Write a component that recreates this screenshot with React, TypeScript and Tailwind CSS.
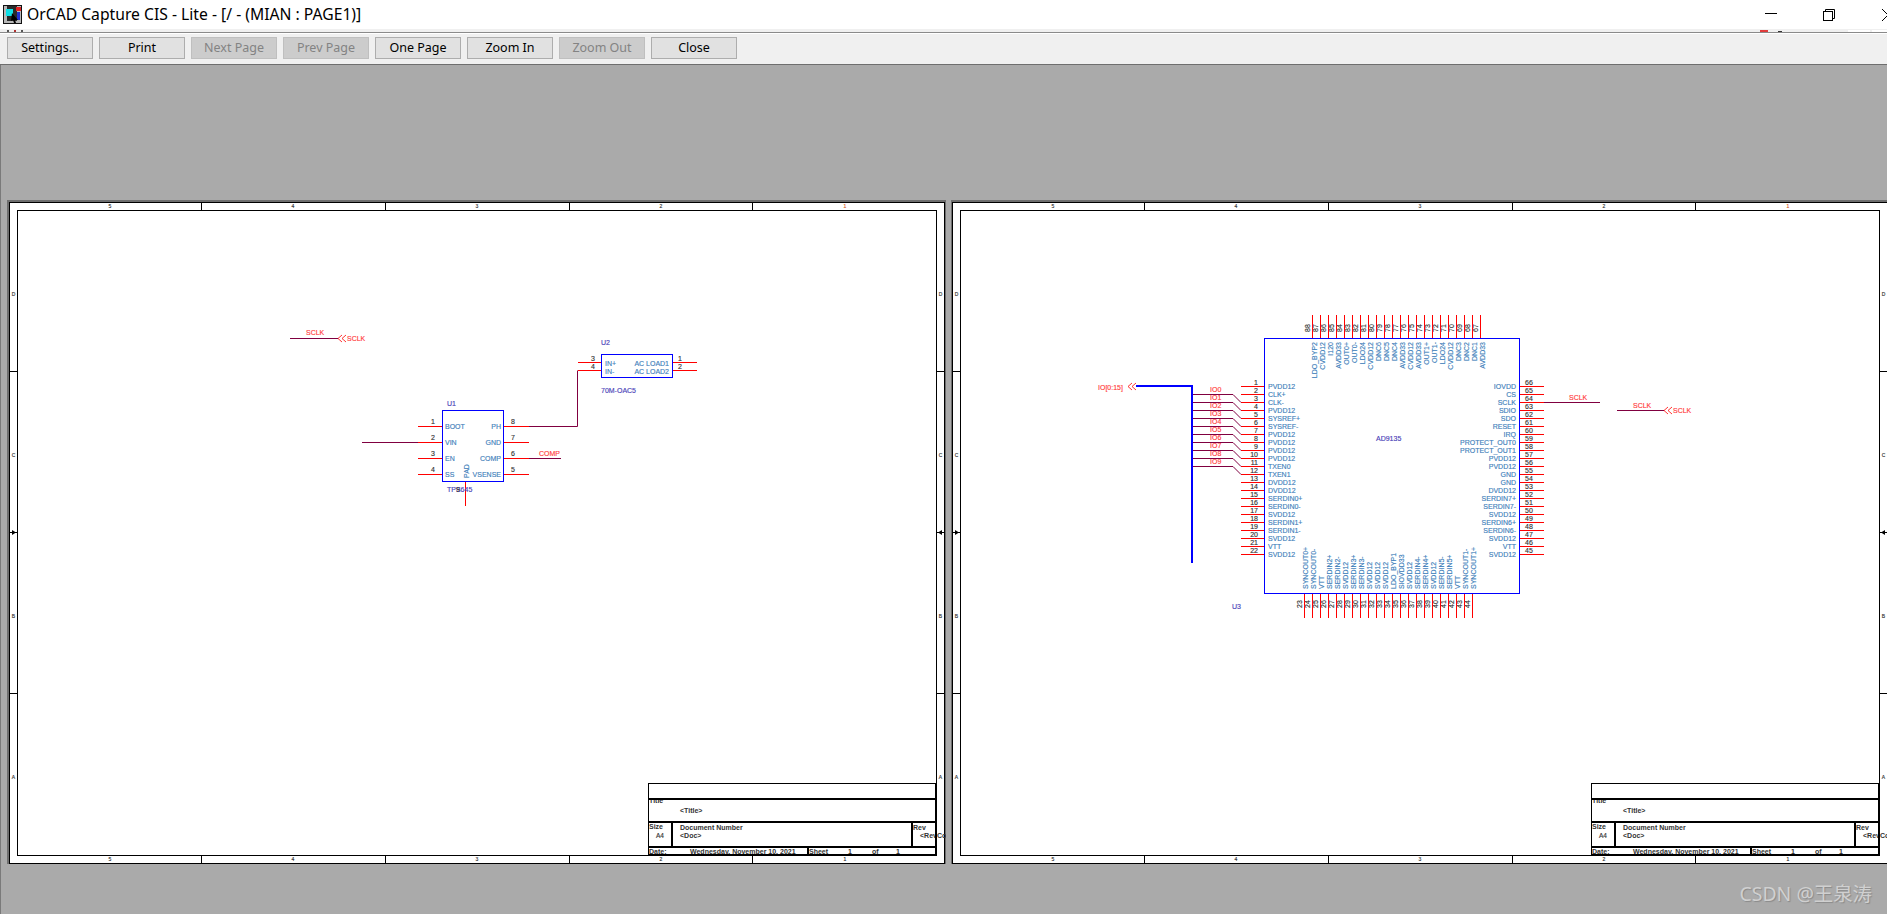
import type { ReactNode } from "react";

const RED = "#ff0000";
const WIRE = "#800040";
const BLUE = "#0000ff";
const NAME = "#3f7fbb";
const NUM = "#333333";
const NET = "#ff4040";
const REF = "#4a3fb8";

const buttons = [
  { label: "Settings...", off: false },
  { label: "Print", off: false },
  { label: "Next Page", off: true },
  { label: "Prev Page", off: true },
  { label: "One Page", off: false },
  { label: "Zoom In", off: false },
  { label: "Zoom Out", off: true },
  { label: "Close", off: false },
];

const u3Left = ["PVDD12", "CLK+", "CLK-", "PVDD12", "SYSREF+", "SYSREF-", "PVDD12", "PVDD12", "PVDD12", "PVDD12", "TXEN0", "TXEN1", "DVDD12", "DVDD12", "SERDIN0+", "SERDIN0-", "SVDD12", "SERDIN1+", "SERDIN1-", "SVDD12", "VTT", "SVDD12"];
const u3Right = ["IOVDD", "CS", "SCLK", "SDIO", "SDO", "RESET", "IRQ", "PROTECT_OUT0", "PROTECT_OUT1", "PVDD12", "PVDD12", "GND", "GND", "DVDD12", "SERDIN7+", "SERDIN7-", "SVDD12", "SERDIN6+", "SERDIN6-", "SVDD12", "VTT", "SVDD12"];
const u3Top = ["LDO_BYP2", "CVDD12", "I120", "AVDD33", "OUT0+", "OUT0-", "LDO24", "CVDD12", "DNC6", "DNC5", "DNC4", "AVDD33", "CVDD12", "AVDD33", "OUT1+", "OUT1-", "LDO24", "CVDD12", "DNC3", "DNC2", "DNC1", "AVDD33"];
const u3Bottom = ["SYNCOUT0+", "SYNCOUT0-", "VTT", "SERDIN2+", "SERDIN2-", "SVDD12", "SERDIN3+", "SERDIN3-", "SVDD12", "SVDD12", "SVDD12", "LDO_BYP1", "SIOVDD33", "SVDD12", "SERDIN4-", "SERDIN4+", "SVDD12", "SERDIN5-", "SERDIN5+", "VTT", "SYNCOUT1-", "SYNCOUT1+"];

type TProps = {
  x: number;
  y: number;
  c?: string;
  s?: number;
  a?: "start" | "middle" | "end";
  up?: boolean;
  b?: boolean;
  children: ReactNode;
};

function T({ x, y, c = NUM, s = 7, a = "start", up, b, children }: TProps) {
  return (
    <text
      x={x}
      y={y}
      fill={c}
      stroke={b ? "none" : c}
      strokeWidth={0.15}
      fontSize={s}
      textAnchor={a}
      fontWeight={b ? 700 : 400}
      transform={up ? `rotate(-90 ${x} ${y})` : undefined}
    >
      {children}
    </text>
  );
}

function L({ x1, y1, x2, y2, c = "#000", w = 1 }: { x1: number; y1: number; x2: number; y2: number; c?: string; w?: number }) {
  return <line x1={x1} y1={y1} x2={x2} y2={y2} stroke={c} strokeWidth={w} />;
}

// the << off-page connector, tip on the left
function OffPage({ x, y }: { x: number; y: number }) {
  return (
    <path
      d={`M${x + 4} ${y - 3.5}L${x} ${y}L${x + 4} ${y + 3.5}M${x + 8} ${y - 3.5}L${x + 4} ${y}L${x + 8} ${y + 3.5}`}
      fill="none"
      stroke={RED}
      strokeWidth={0.8}
    />
  );
}

function Frame({ dx }: { dx: number }) {
  const ticksX = [201, 385, 569, 752];
  const ticksY = [371, 532, 693];
  const cols = [
    { n: "5", x: 110 },
    { n: "4", x: 293 },
    { n: "3", x: 477 },
    { n: "2", x: 661 },
    { n: "1", x: 845 },
  ];
  const rows = [
    { n: "D", y: 296 },
    { n: "C", y: 457 },
    { n: "B", y: 618 },
    { n: "A", y: 779 },
  ];
  return (
    <g transform={`translate(${dx} 0)`}>
      <rect x={9.5} y={202.5} width={935} height={661} fill="#fff" stroke="#000" />
      <rect x={17.5} y={210.5} width={919} height={645} fill="#fff" stroke="#000" />
      {ticksX.map((x) => (
        <g key={x}>
          <L x1={x + 0.5} y1={202} x2={x + 0.5} y2={210} />
          <L x1={x + 0.5} y1={855} x2={x + 0.5} y2={863} />
        </g>
      ))}
      {ticksY.map((y, i) =>
        i === 1 ? (
          <g key={y}>
            <L x1={10} y1={y + 0.5} x2={17} y2={y + 0.5} />
            <path d={`M12 ${y - 2}L16 ${y + 0.5}L12 ${y + 3}Z`} fill="#000" />
            <L x1={937} y1={y + 0.5} x2={944} y2={y + 0.5} />
            <path d={`M942 ${y - 2}L938 ${y + 0.5}L942 ${y + 3}Z`} fill="#000" />
          </g>
        ) : (
          <g key={y}>
            <L x1={10} y1={y + 0.5} x2={17} y2={y + 0.5} />
            <L x1={937} y1={y + 0.5} x2={944} y2={y + 0.5} />
          </g>
        ),
      )}
      {cols.map((k) => (
        <g key={k.n}>
          <T x={k.x} y={208} s={5} a="middle" c={k.n === "1" ? "#d8602a" : "#333"}>{k.n}</T>
          <T x={k.x} y={861} s={5} a="middle" c="#333">{k.n}</T>
        </g>
      ))}
      {rows.map((k) => (
        <g key={k.n}>
          <T x={13.5} y={k.y} s={5} a="middle" c="#333">{k.n}</T>
          <T x={940.5} y={k.y} s={5} a="middle" c="#333">{k.n}</T>
        </g>
      ))}

      {/* title block */}
      <T x={649} y={803} b>Title</T>
      <T x={680} y={813} b>{"<Title>"}</T>
      <T x={649} y={829} b>Size</T>
      <T x={656} y={838} s={6.5}>A4</T>
      <T x={680} y={830} b>Document Number</T>
      <T x={680} y={838} b>{"<Doc>"}</T>
      <T x={913} y={830} b>Rev</T>
      <T x={920} y={838} b>{"<RevCo"}</T>
      <T x={649} y={854} b>Date:</T>
      <T x={690} y={854} b>Wednesday, November 10, 2021</T>
      <T x={809} y={854} b>Sheet</T>
      <T x={848} y={854} b>1</T>
      <T x={872} y={854} b>of</T>
      <T x={896} y={854} b>1</T>
      <L x1={648} y1={783.5} x2={936} y2={783.5} />
      <L x1={648} y1={799} x2={936} y2={799} w={2} />
      <L x1={648} y1={822} x2={936} y2={822} w={2} />
      <L x1={648} y1={847} x2={936} y2={847} w={2} />
      <L x1={648} y1={855} x2={936} y2={855} w={2} />
      <L x1={648.5} y1={783} x2={648.5} y2={855} />
      <L x1={672} y1={822} x2={672} y2={847} w={2} />
      <L x1={912} y1={822} x2={912} y2={847} w={2} />
      <L x1={808} y1={847} x2={808} y2={855} w={2} />
      <L x1={936} y1={783} x2={936} y2={855} w={2} />
    </g>
  );
}

function PageOne() {
  const leftPins = [
    { n: "1", t: "BOOT", y: 426 },
    { n: "2", t: "VIN", y: 442 },
    { n: "3", t: "EN", y: 458 },
    { n: "4", t: "SS", y: 474 },
  ];
  const rightPins = [
    { n: "8", t: "PH", y: 426 },
    { n: "7", t: "GND", y: 442 },
    { n: "6", t: "COMP", y: 458 },
    { n: "5", t: "VSENSE", y: 474 },
  ];
  return (
    <g>
      <L x1={290} y1={338.5} x2={338} y2={338.5} c={WIRE} />
      <OffPage x={338} y={338.5} />
      <T x={306} y={335} c={NET}>SCLK</T>
      <T x={347} y={341} c={NET}>SCLK</T>

      {/* U2 */}
      <T x={601} y={345} c={REF}>U2</T>
      <rect x={601.5} y={354.5} width={71} height={23} fill="none" stroke={BLUE} />
      <L x1={578} y1={362.5} x2={601} y2={362.5} c={RED} />
      <L x1={578} y1={370.5} x2={601} y2={370.5} c={RED} />
      <L x1={673} y1={362.5} x2={697} y2={362.5} c={RED} />
      <L x1={673} y1={370.5} x2={697} y2={370.5} c={RED} />
      <T x={591} y={361}>3</T>
      <T x={591} y={369}>4</T>
      <T x={678} y={361}>1</T>
      <T x={678} y={369}>2</T>
      <T x={605} y={366} c={NAME}>IN+</T>
      <T x={605} y={374} c={NAME}>IN-</T>
      <T x={669} y={366} c={NAME} a="end">AC LOAD1</T>
      <T x={669} y={374} c={NAME} a="end">AC LOAD2</T>
      <T x={601} y={393} c={REF}>70M-OAC5</T>
      <path d="M529 426.5H577.5V370.5" fill="none" stroke={WIRE} />

      {/* U1 */}
      <T x={447} y={406} c={REF}>U1</T>
      <rect x={442.5} y={410.5} width={61} height={71} fill="none" stroke={BLUE} />
      {leftPins.map((p) => (
        <g key={p.n}>
          <L x1={418} y1={p.y + 0.5} x2={442} y2={p.y + 0.5} c={RED} />
          <T x={431} y={p.y - 2}>{p.n}</T>
          <T x={445} y={p.y + 3} c={NAME}>{p.t}</T>
        </g>
      ))}
      {rightPins.map((p) => (
        <g key={p.n}>
          <L x1={504} y1={p.y + 0.5} x2={529} y2={p.y + 0.5} c={RED} />
          <T x={511} y={p.y - 2}>{p.n}</T>
          <T x={501} y={p.y + 3} c={NAME} a="end">{p.t}</T>
        </g>
      ))}
      <L x1={362} y1={442.5} x2={418} y2={442.5} c={WIRE} />
      <L x1={529} y1={458.5} x2={561} y2={458.5} c={WIRE} />
      <T x={539} y={456} c={NET}>COMP</T>
      <L x1={465.5} y1={482} x2={465.5} y2={506} c={RED} />
      <T x={469} y={478} c={NAME} up>PAD</T>
      <T x={447} y={492} c={REF}>TPS645</T>
      <T x={456} y={492} c={NUM}>9</T>
    </g>
  );
}

function PageTwo() {
  return (
    <g>
      <rect x={1264.5} y={338.5} width={255} height={255} fill="none" stroke={BLUE} />
      <T x={1376} y={441} c={REF}>AD9135</T>
      <T x={1232} y={609} c={REF}>U3</T>

      {u3Left.map((t, i) => {
        const y = 386 + i * 8;
        return (
          <g key={i}>
            <L x1={1241} y1={y + 0.5} x2={1264} y2={y + 0.5} c={RED} />
            <T x={1258} y={y - 1} a="end">{i + 1}</T>
            <T x={1268} y={y + 3} c={NAME}>{t}</T>
          </g>
        );
      })}
      {u3Right.map((t, i) => {
        const y = 386 + i * 8;
        return (
          <g key={i}>
            <L x1={1520} y1={y + 0.5} x2={1544} y2={y + 0.5} c={RED} />
            <T x={1525} y={y - 1}>{66 - i}</T>
            <T x={1516} y={y + 3} c={NAME} a="end">{t}</T>
          </g>
        );
      })}
      {u3Top.map((t, i) => {
        const x = 1312 + i * 8;
        return (
          <g key={i}>
            <L x1={x + 0.5} y1={315} x2={x + 0.5} y2={338} c={RED} />
            <T x={x - 2} y={332} up>{88 - i}</T>
            <T x={x + 5} y={342} c={NAME} a="end" up>{t}</T>
          </g>
        );
      })}
      {u3Bottom.map((t, i) => {
        const x = 1304 + i * 8;
        return (
          <g key={i}>
            <L x1={x + 0.5} y1={594} x2={x + 0.5} y2={618} c={RED} />
            <T x={x - 2} y={608} up>{23 + i}</T>
            <T x={x + 4} y={589} c={NAME} up>{t}</T>
          </g>
        );
      })}

      {/* IO bus */}
      <T x={1098} y={390} c={NET}>IO[0:15]</T>
      <OffPage x={1128} y={386.5} />
      <path d="M1136 386H1192V563" fill="none" stroke={BLUE} strokeWidth={2} />
      {Array.from({ length: 10 }, (_, i) => {
        const y = 394 + i * 8;
        return (
          <g key={i}>
            <path d={`M1193 ${y + 0.5}H1233L1241 ${y + 8.5}`} fill="none" stroke={WIRE} />
            <T x={1210} y={y - 2} c={NET}>{`IO${i}`}</T>
          </g>
        );
      })}

      <L x1={1544} y1={402.5} x2={1600} y2={402.5} c={WIRE} />
      <T x={1569} y={400} c={NET}>SCLK</T>
      <L x1={1617} y1={410.5} x2={1664} y2={410.5} c={WIRE} />
      <T x={1633} y={408} c={NET}>SCLK</T>
      <OffPage x={1664} y={410.5} />
      <T x={1673} y={413} c={NET}>SCLK</T>
    </g>
  );
}

function AppIcon() {
  return (
    <svg width="19" height="19" viewBox="0 0 19 19" className="ml-[3px] shrink-0">
      <rect width="19" height="19" fill="#111" />
      <rect x="1" y="1" width="17" height="17" fill="#b8b8b8" />
      <rect x="4" y="1" width="10" height="15" fill="#2a2a2a" />
      <rect x="3" y="4" width="7" height="7" fill="#10e0e8" />
      <rect x="13" y="2" width="5" height="4" fill="#e02020" />
      <rect x="14" y="7" width="3" height="8" fill="#2030d0" />
      <path d="M9 8l6 7h-3l1 3h-2l-1-3-2 1z" fill="#000" />
    </svg>
  );
}

export default function App() {
  return (
    <div className="flex h-[914px] w-[1887px] flex-col overflow-hidden bg-[#aaaaaa] font-['Noto_Sans',sans-serif]">
      <div className="relative flex h-[29px] shrink-0 items-center bg-white">
        <AppIcon />
        <span className="ml-[5px] text-[15.7px] leading-none text-black">OrCAD Capture CIS - Lite - [/ - (MIAN : PAGE1)]</span>
        <div className="ml-auto flex items-center">
          <svg width="12" height="12" viewBox="0 0 12 12" className="mr-[46px]">
            <path d="M0 4.5H12" stroke="#000" />
          </svg>
          <svg width="12" height="12" viewBox="0 0 12 12" className="mr-[47px]">
            <rect x="0.5" y="2.5" width="9" height="9" fill="#fff" stroke="#000" />
            <path d="M2.5 2.5V0.5H11.5V9.5H9.5" fill="none" stroke="#000" />
          </svg>
          <svg width="5" height="12" viewBox="0 0 5 12">
            <path d="M0 0L6 6L0 12" fill="none" stroke="#000" />
          </svg>
        </div>
      </div>

      <div className="flex h-[4px] shrink-0 items-start border-b border-[#8a8a8a] bg-[#f0f0f0]">
        <span className="ml-[7px] mt-[1px] h-[2px] w-[2px] bg-[#555]" />
        <span className="ml-[5px] mt-[1px] h-[2px] w-[2px] bg-[#b03030]" />
        <span className="ml-[5px] mt-[1px] h-[2px] w-[2px] bg-[#555]" />
        <span className="ml-[1737px] mt-[1px] h-[2px] w-[8px] bg-[#e03c3c]" />
        <span className="ml-[10px] mt-[2px] h-[1px] w-[4px] bg-[#333]" />
        <span className="ml-[66px] mt-[1px] h-[2px] w-[22px] bg-white" />
        <span className="ml-[2px] mt-[1px] h-[2px] w-[15px] bg-white" />
      </div>

      <div className="flex h-[32px] shrink-0 items-start gap-[6px] border-t border-b border-t-white border-b-[#6e6e6e] bg-[#f0f0f0] pl-[7px] pt-[3px]">
        {buttons.map((b) => (
          <div
            key={b.label}
            className={
              b.off
                ? "flex h-[22px] w-[86px] items-center justify-center border border-[#bfbfbf] bg-[#cccccc] pt-[1px] text-[12.5px] text-[#838383]"
                : "flex h-[22px] w-[86px] items-center justify-center border border-[#adadad] bg-[#e1e1e1] pt-[1px] text-[12.5px] text-black"
            }
          >
            {b.label}
          </div>
        ))}
      </div>

      <div className="relative flex min-h-0 flex-1 gap-[5px] border-l border-[#7a7a7a] pl-[6px] pt-[135px]">
        <div className="h-[664px] w-[939px] shrink-0">
          <svg width="939" height="664" viewBox="7 200 939 664" className="block bg-[#6e6e6e] font-['Liberation_Sans',Arial,sans-serif]">
            <Frame dx={0} />
            <PageOne />
          </svg>
        </div>
        <div className="h-[664px] w-[936px] shrink-0">
          <svg width="936" height="664" viewBox="951 200 936 664" className="block bg-[#6e6e6e] font-['Liberation_Sans',Arial,sans-serif]">
            <Frame dx={943} />
            <PageTwo />
          </svg>
        </div>
        <span className="absolute bottom-[11px] right-[15px] font-['Noto_Sans','Noto_Sans_CJK_SC',sans-serif] text-[19.4px] leading-none text-[#d0d0d0] [text-shadow:1px_1px_1px_#8a8a8a]">
          CSDN @王泉涛
        </span>
      </div>
    </div>
  );
}
